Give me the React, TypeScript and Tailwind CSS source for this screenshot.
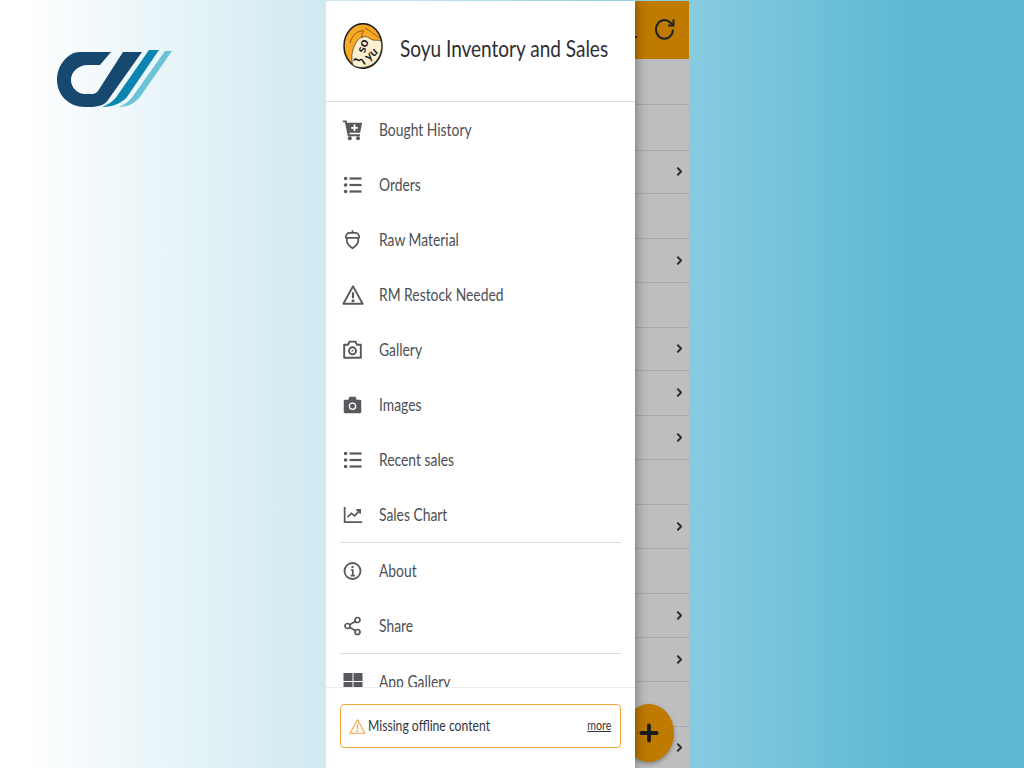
import React from "react";
import { ChevronRight, Plus } from "lucide-react";

const ico = "w-[20px] h-[20px] text-[#56595e] block";

function CartPlus() {
  return (
    <svg viewBox="0 0 24 24" className="w-[22px] h-[22px] text-[#56595e] block -ml-[1px]" fill="currentColor">
      <path d="M1 1.500h3.800l.9 2.600H22l-2.200 10.800H8l.4 1.800h11.200v2H6.400L3.200 3.500H1z" />
      <circle cx="8.500" cy="21" r="2.200" />
      <circle cx="17.500" cy="21" r="2.200" />
      <path d="M12.600 6h2v2.600h2.600v2h-2.600v2.600h-2v-2.600H10v-2h2.600z" fill="#fff" />
    </svg>
  );
}

function ListIcon() {
  return (
    <svg viewBox="0 0 20 20" className={ico} fill="currentColor">
      <circle cx="2.600" cy="3.500" r="1.800" />
      <circle cx="2.600" cy="10" r="1.800" />
      <circle cx="2.600" cy="16.500" r="1.800" />
      <rect x="6.500" y="2.400" width="12" height="2.200" />
      <rect x="6.500" y="8.900" width="12" height="2.200" />
      <rect x="6.500" y="15.400" width="12" height="2.200" />
    </svg>
  );
}

function Acorn() {
  return (
    <svg viewBox="0 0 24 24" className="w-[21px] h-[21px] text-[#56595e] block -ml-[1px]" fill="none" stroke="currentColor" strokeWidth="2" strokeLinejoin="round">
      <path d="M12 1.500v3" />
      <path d="M4.500 8.500c0-2.400 2-4 4-4h7c2 0 4 1.600 4 4v1.500h-15z" />
      <path d="M5.500 10v3.500c0 3.600 3.500 6.500 6.500 8.500 3-2 6.500-4.900 6.500-8.500V10" />
    </svg>
  );
}

function Triangle({ className, strokeWidth = 2 }: { className: string; strokeWidth?: number }) {
  return (
    <svg viewBox="0 0 24 24" className={className} fill="none" stroke="currentColor" strokeWidth={strokeWidth} strokeLinejoin="round">
      <path d="M12 2.500L1.500 21.500h21z" />
      <path d="M12 9v6.500" strokeWidth={strokeWidth + 0.4} />
      <circle cx="12" cy="18.300" r="0.700" fill="currentColor" />
    </svg>
  );
}

function GalleryCam() {
  return (
    <svg viewBox="0 0 24 24" className="w-[21px] h-[21px] text-[#56595e] block -ml-[1px]" fill="none" stroke="currentColor" strokeWidth="2.200" strokeLinejoin="round">
      <path d="M2.500 6.500h4.500l1.500-3.500h7L17 6.500h4.500v15h-19z" />
      <circle cx="12" cy="13.500" r="4" />
      <path d="M11 14.500l2-2" strokeWidth="1.300" />
    </svg>
  );
}

function CamSolid() {
  return (
    <svg viewBox="0 0 24 24" className="w-[21px] h-[21px] text-[#56595e] block -ml-[1px]">
      <path
        fill="currentColor"
        d="M3.500 6.500h3.700l1.300-3.500h7l1.300 3.500h3.700a1.500 1.500 0 0 1 1.500 1.500v12.500a1.500 1.500 0 0 1-1.500 1.500h-17a1.500 1.500 0 0 1-1.500-1.500V8a1.500 1.500 0 0 1 1.500-1.500z"
      />
      <circle cx="12" cy="14" r="3.600" fill="none" stroke="#fff" strokeWidth="1.500" />
    </svg>
  );
}

function ChartIcon() {
  return (
    <svg viewBox="0 0 24 24" className="w-[20px] h-[20px] text-[#56595e] block" fill="none" stroke="currentColor" strokeWidth="2.100">
      <path d="M2 2.500v18h21" />
      <path d="M5.500 14.500l4.500-4.500 4 3 5.500-6" />
      <path d="M16 6h4.500v4.500" />
    </svg>
  );
}

function InfoIcon() {
  return (
    <svg viewBox="0 0 20 20" className={ico} fill="none" stroke="currentColor" strokeWidth="1.800">
      <circle cx="9.500" cy="10" r="8" />
      <circle cx="9.500" cy="6" r="1.200" fill="currentColor" stroke="none" />
      <path d="M7.800 9h2v5.500M7.500 14.700h4.400" strokeWidth="1.700" />
    </svg>
  );
}

function ShareIcon() {
  return (
    <svg viewBox="0 0 20 20" className={ico} fill="none" stroke="currentColor" strokeWidth="1.700">
      <circle cx="4.500" cy="10" r="2.500" />
      <circle cx="14.500" cy="4" r="2.500" />
      <circle cx="14.500" cy="16" r="2.500" />
      <path d="M6.700 8.700l5.600-3.400M6.700 11.300l5.600 3.400" />
    </svg>
  );
}

function Grid() {
  return (
    <svg viewBox="0 0 20 20" className={ico} fill="currentColor">
      <rect x="0.500" y="1" width="9" height="8" />
      <rect x="10.500" y="1" width="9" height="8" />
      <rect x="0.500" y="10" width="9" height="8" />
      <rect x="10.500" y="10" width="9" height="8" />
    </svg>
  );
}

function RefreshIcon() {
  return (
    <svg width="20" height="22" viewBox="0 0 20 22" fill="none" stroke="#1f2226" strokeWidth="2" className="block">
      <path d="M18 11.500a8.500 9.300 0 1 1-3-7.200L18 7" />
      <path d="M18.500 1.500V7.500h-5.500" />
    </svg>
  );
}

function Item({ icon, label }: { icon: React.ReactNode; label: string }) {
  return (
    <div className="flex h-[55px] items-center pl-[17px] shrink-0">
      <div className="w-[36px] flex justify-start shrink-0">{icon}</div>
      <span className="text-[16.500px] text-[#4d4f53] origin-left scale-x-[0.84] whitespace-nowrap pt-[2px]">{label}</span>
    </div>
  );
}

function Row({ chevron, h }: { chevron?: boolean; h: string }) {
  return (
    <div className={`${h} shrink-0 border-b border-[#a9a9ad] flex items-center justify-end pr-[3px] pb-[1px]`}>
      {chevron && <ChevronRight size={13} strokeWidth={3.500} className="text-[#2b2d31]" />}
    </div>
  );
}

function Logo() {
  return (
    <svg width="130" height="70" viewBox="50 45 130 70" className="block">
      <path
        fill="#17486f"
        d="M80 52L111 52L100 65L88 65C78 65 71 72 71 80C71 88 78 94 85 94L92 94C95 94 97 92 98 91L123 52L142 52L108 100C105 105 98 107 90 107L85 107C69 107 57 95 57 80C57 65 68 52 80 52Z"
      />
      <path fill="#0c84b0" d="M149 50L159 50L127 97C122 103 113 107 102 107C110 104 114 100 117 96Z" />
      <path fill="#6cc3d8" d="M165 51L172 51L140 97C135 103 128 107 119 107C126 104 130 100 133 96Z" />
    </svg>
  );
}

function SoyuLogo() {
  return (
    <svg width="40" height="46" viewBox="0 0 40 46" className="block shrink-0">
      <ellipse cx="20" cy="23" rx="19" ry="22.300" fill="#f9a825" stroke="#1c1c1c" strokeWidth="1.500" />
      <path d="M10 42C7 34 10 24 14 18C17 14 22 12 26 15C31 19 35 16 38 18C40 26 37 35 31 40C25 45 15 46 10 42Z" fill="#fdf0d0" stroke="#1c1c1c" strokeWidth="0.600" />
      <path d="M7 20C9 12 15 7 21 8C18 11 18 14 20 15M22 5C26 7 30 11 37 15" fill="none" stroke="#8a5a10" strokeWidth="1" />
      <text x="20" y="27" fontSize="13" fontWeight="700" fill="#1c1c1c" textAnchor="middle" transform="rotate(-72 20 23)" fontFamily="Lato">so</text>
      <text x="28" y="35" fontSize="12" fontWeight="700" fill="#1c1c1c" textAnchor="middle" transform="rotate(-42 28 31)" fontFamily="Lato">yu</text>
      <path d="M11 37c3-3 4 2 6 0s3 2 5 4" fill="none" stroke="#1c1c1c" strokeWidth="1.500" strokeLinecap="round" />
    </svg>
  );
}

export default function App() {
  return (
    <div
      className="w-[1024px] h-[768px] overflow-hidden flex bg-[linear-gradient(90deg,#ffffff_2%,#cfe9f1_32%,#88cce0_67%,#5bb7d3_90%,#5bb7d3_100%)]"
      style={{ fontFamily: "Lato, 'Noto Sans', sans-serif" }}
    >
      <div className="w-[326px] shrink-0 pl-[50px] pt-[45px]">
        <Logo />
      </div>

      <div className="relative w-[363px] h-[767px] mt-[1px] flex shrink-0 overflow-hidden">
        <div className="relative z-10 w-[309px] shrink-0 bg-white flex flex-col shadow-[0_0_12px_rgba(0,0,0,0.45)]">
          <div className="h-[101px] shrink-0 border-b border-[#dcdcde] flex items-center pl-[17px]">
            <div className="mb-[10px]">
              <SoyuLogo />
            </div>
            <span className="ml-[17px] mb-[6px] text-[23px] text-[#2c2e32] whitespace-nowrap origin-left scale-x-[0.826]">
              Soyu Inventory and Sales
            </span>
          </div>

          <div className="flex-1 min-h-0 overflow-hidden flex flex-col">
            <Item icon={<CartPlus />} label="Bought History" />
            <Item icon={<ListIcon />} label="Orders" />
            <Item icon={<Acorn />} label="Raw Material" />
            <Item icon={<Triangle className="w-[22px] h-[22px] text-[#56595e] block -ml-[1px]" />} label="RM Restock Needed" />
            <Item icon={<GalleryCam />} label="Gallery" />
            <Item icon={<CamSolid />} label="Images" />
            <Item icon={<ListIcon />} label="Recent sales" />
            <Item icon={<ChartIcon />} label="Sales Chart" />
            <div className="mx-[14px] border-t border-[#dcdcde] shrink-0" />
            <Item icon={<InfoIcon />} label="About" />
            <Item icon={<ShareIcon />} label="Share" />
            <div className="mx-[14px] border-t border-[#dcdcde] shrink-0" />
            <Item icon={<Grid />} label="App Gallery" />
          </div>

          <div className="h-[81px] shrink-0 border-t border-[#ececee] px-[14px] pt-[16px]">
            <div className="h-[44px] border-[1.5px] border-[#f3a63b] rounded-[4px] flex items-center pl-[8px] pr-[9px]">
              <Triangle className="w-[17px] h-[17px] text-[#f5a840] shrink-0" strokeWidth={1.600} />
              <span className="ml-[2px] text-[14.500px] text-[#33353a] whitespace-nowrap origin-left scale-x-[0.84] pb-[1px]">Missing offline content</span>
              <span className="ml-auto text-[12.500px] text-[#33353a] underline origin-right scale-x-[0.85]">more</span>
            </div>
          </div>
        </div>

        <div className="flex-1 min-w-0 flex flex-col bg-[#bebebf]">
          <div className="relative h-[58px] shrink-0 bg-[#bf7a00] flex items-center justify-end pr-[14px] pb-[2px]">
            <RefreshIcon />
            <div className="absolute left-0 top-[35px] w-[2px] h-[2px] bg-[#2a2a28]" />
          </div>
          <Row h="h-[46px]" />
          <Row h="h-[46px]" />
          <Row h="h-[43px]" chevron />
          <Row h="h-[45px]" />
          <Row h="h-[44px]" chevron />
          <Row h="h-[45px]" />
          <Row h="h-[43px]" chevron />
          <Row h="h-[45px]" chevron />
          <Row h="h-[44px]" chevron />
          <Row h="h-[45px]" />
          <Row h="h-[44px]" chevron />
          <Row h="h-[45px]" />
          <Row h="h-[44px]" chevron />
          <Row h="h-[44px]" chevron />
          <Row h="h-[45px]" />
          <Row h="h-[42px]" chevron />
        </div>

        <div className="absolute left-[298px] top-[703px] w-[50px] h-[58px] rounded-[50%] bg-[#bf7a00] flex items-center justify-center shadow-[0_2px_4px_rgba(0,0,0,0.3)]">
          <Plus size={26} strokeWidth={3.500} className="text-[#1a1c20]" />
        </div>
      </div>
    </div>
  );
}
